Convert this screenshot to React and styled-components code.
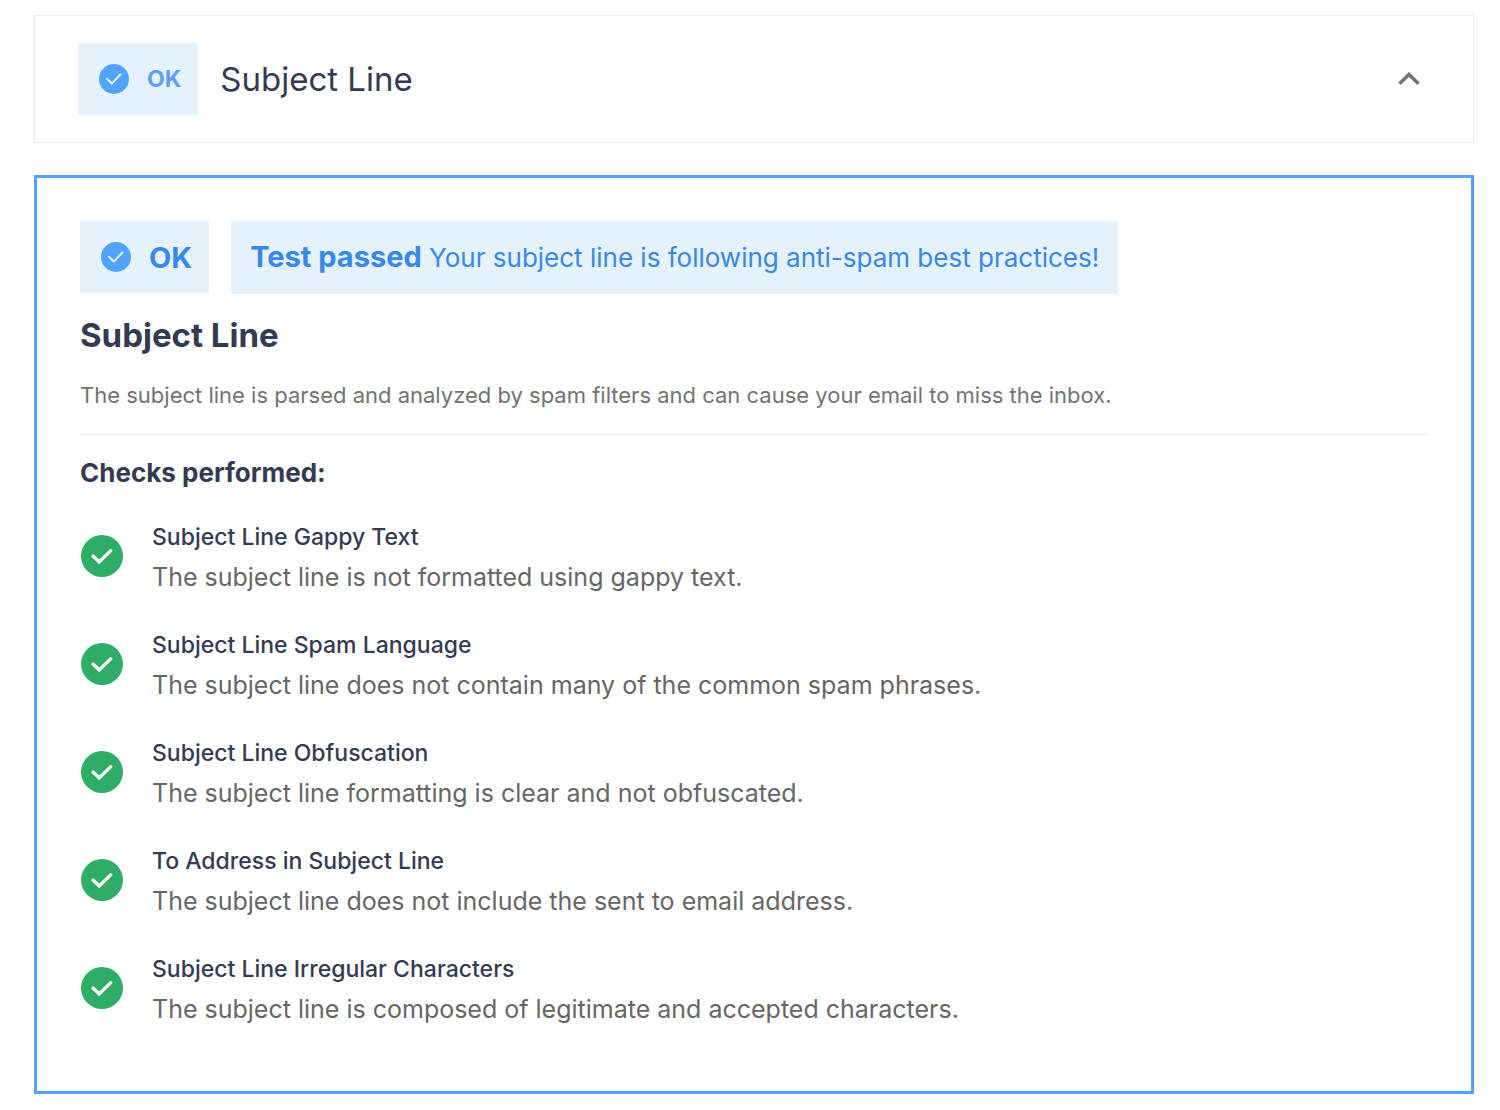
import styled, { createGlobalStyle } from 'styled-components';

const checks = [
  {
    title: 'Subject Line Gappy Text',
    text: 'The subject line is not formatted using gappy text.',
  },
  {
    title: 'Subject Line Spam Language',
    text: 'The subject line does not contain many of the common spam phrases.',
  },
  {
    title: 'Subject Line Obfuscation',
    text: 'The subject line formatting is clear and not obfuscated.',
  },
  {
    title: 'To Address in Subject Line',
    text: 'The subject line does not include the sent to email address.',
  },
  {
    title: 'Subject Line Irregular Characters',
    text: 'The subject line is composed of legitimate and accepted characters.',
  },
];

const InfoCheck = () => (
  <svg width="30" height="30" viewBox="0 0 30 30" fill="none" aria-hidden="true">
    <circle cx="15" cy="15" r="15" fill="#52a3fd" />
    <path
      d="M8 14.9L12.9 19.5L21.5 10.4"
      stroke="#fff"
      strokeWidth="1.8"
      strokeLinecap="round"
      strokeLinejoin="round"
    />
  </svg>
);

const PassedCheck = () => (
  <svg width="42" height="42" viewBox="0 0 42 42" fill="none" aria-hidden="true">
    <circle cx="21" cy="21" r="21" fill="#2fad66" />
    <path
      d="M12 21L18.2 27L29.8 15.6"
      stroke="#fff"
      strokeWidth="3.2"
      strokeLinecap="round"
      strokeLinejoin="miter"
    />
  </svg>
);

const ChevronUp = () => (
  <svg width="22" height="14" viewBox="0 0 22 14" fill="none" aria-hidden="true">
    <path d="M1.5 11.8L11 2.4L20.5 11.8" stroke="#757575" strokeWidth="3.6" />
  </svg>
);

const StatusBadge = ({ large }) => (
  <SBadge $large={large}>
    <InfoCheck />
    OK
  </SBadge>
);

const Check = ({ title, text }) => (
  <SCheck>
    <PassedCheck />
    <div>
      <SCheckTitle>{title}</SCheckTitle>
      <SCheckText>{text}</SCheckText>
    </div>
  </SCheck>
);

function App() {
  return (
    <>
      <GlobalStyle />
      <SPage>
        <SAccordionHead type="button" aria-expanded="true" aria-controls="subject-line">
          <StatusBadge />
          <SAccordionTitle>Subject Line</SAccordionTitle>
          <ChevronUp />
        </SAccordionHead>

        <SPanel id="subject-line">
          <SResult>
            <StatusBadge large />
            <SMessage>
              <strong>Test passed</strong> Your subject line is following anti-spam best practices!
            </SMessage>
          </SResult>
          <STitle>Subject Line</STitle>
          <SIntro>
            The subject line is parsed and analyzed by spam filters and can cause your email to miss
            the inbox.
          </SIntro>
          <SSubtitle>Checks performed:</SSubtitle>
          <SCheckList>
            {checks.map((check) => (
              <Check key={check.title} {...check} />
            ))}
          </SCheckList>
        </SPanel>
      </SPage>
    </>
  );
}

const GlobalStyle = createGlobalStyle`
  * {
    box-sizing: border-box;
  }
  body {
    margin: 0;
    background: #fff;
    color: #353a53;
    font-family: Inter, 'Liberation Sans', sans-serif;
  }
  h2,
  h3,
  h4,
  p,
  ul {
    margin: 0;
    padding: 0;
  }
`;

const SPage = styled.main`
  display: flex;
  flex-direction: column;
  gap: 32px;
  padding: 15px 26px 16px 34px;
`;

const SAccordionHead = styled.button`
  display: flex;
  align-items: center;
  gap: 22px;
  padding: 27px 53px 27px 43px;
  border: 1px solid #ebebeb;
  background: #fff;
  color: inherit;
  font-family: inherit;
  text-align: left;
  cursor: pointer;
`;

const SAccordionTitle = styled.span`
  flex: 1;
  font-size: 33px;
  line-height: 38px;
`;

const SBadge = styled.span`
  display: flex;
  flex-shrink: 0;
  align-items: center;
  gap: 18px;
  height: 72px;
  padding: 0 17px 0 21px;
  background: #e5f1fd;
  color: ${(p) => (p.$large ? '#3888ea' : '#5e9ffb')};
  font-weight: 700;
  font-size: ${(p) => (p.$large ? 29 : 23)}px;
`;

const SPanel = styled.section`
  padding: 43px;
  border: 3px solid #52a3fd;
`;

const SResult = styled.div`
  display: flex;
  align-items: flex-start;
  gap: 22px;
`;

const SMessage = styled.p`
  padding: 18px 19px;
  background: #e5f1fd;
  color: #3888ea;
  font-size: 26px;
  line-height: 36px;
  strong {
    font-weight: 700;
    font-size: 29px;
  }
`;

const STitle = styled.h2`
  margin-top: 22px;
  font-weight: 700;
  font-size: 33px;
  line-height: 38px;
`;

const SIntro = styled.p`
  padding: 26px 0 24px;
  border-bottom: 1px solid #ebebeb;
  color: #737373;
  font-size: 22px;
  line-height: 30px;
`;

const SSubtitle = styled.h3`
  margin-top: 20px;
  font-weight: 700;
  font-size: 26px;
  line-height: 36px;
`;

const SCheckList = styled.ul`
  display: flex;
  flex-direction: column;
  gap: 28px;
  margin-top: 25px;
  padding: 0 1px 20px;
  list-style: none;
`;

const SCheck = styled.li`
  display: flex;
  align-items: center;
  gap: 29px;
  > svg {
    flex-shrink: 0;
  }
`;

const SCheckTitle = styled.h4`
  font-weight: 500;
  font-size: 23px;
  line-height: 42px;
`;

const SCheckText = styled.p`
  color: #666;
  font-size: 25px;
  line-height: 38px;
`;

export default App;
